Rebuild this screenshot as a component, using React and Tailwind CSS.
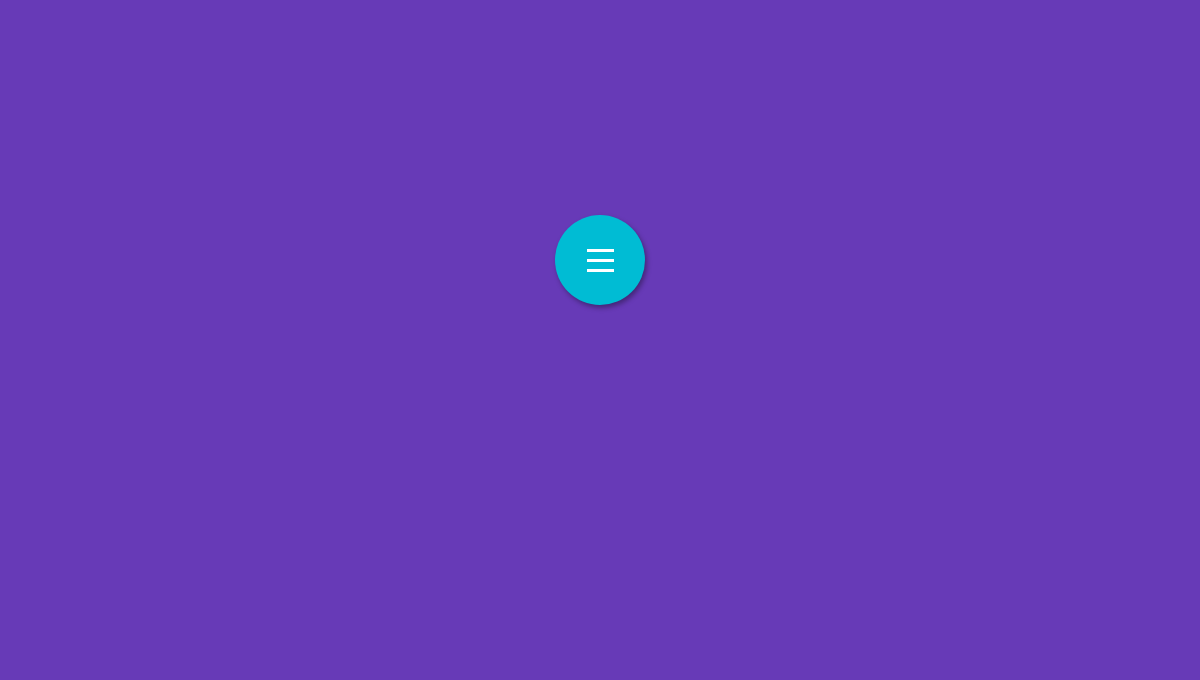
export default function App() {
  return (
    <div className="flex h-[680px] w-full flex-col items-center bg-[#673ab7] pt-[215px]">
      <button
        type="button"
        className="flex h-[90px] w-[90px] flex-col items-center justify-center gap-[7px] rounded-full bg-[#00bcd4] shadow-[2px_3px_5px_rgba(0,0,0,0.35)]"
      >
        <span className="block h-[3px] w-[27px] bg-white" />
        <span className="block h-[3px] w-[27px] bg-white" />
        <span className="block h-[3px] w-[27px] bg-white" />
      </button>
    </div>
  )
}
